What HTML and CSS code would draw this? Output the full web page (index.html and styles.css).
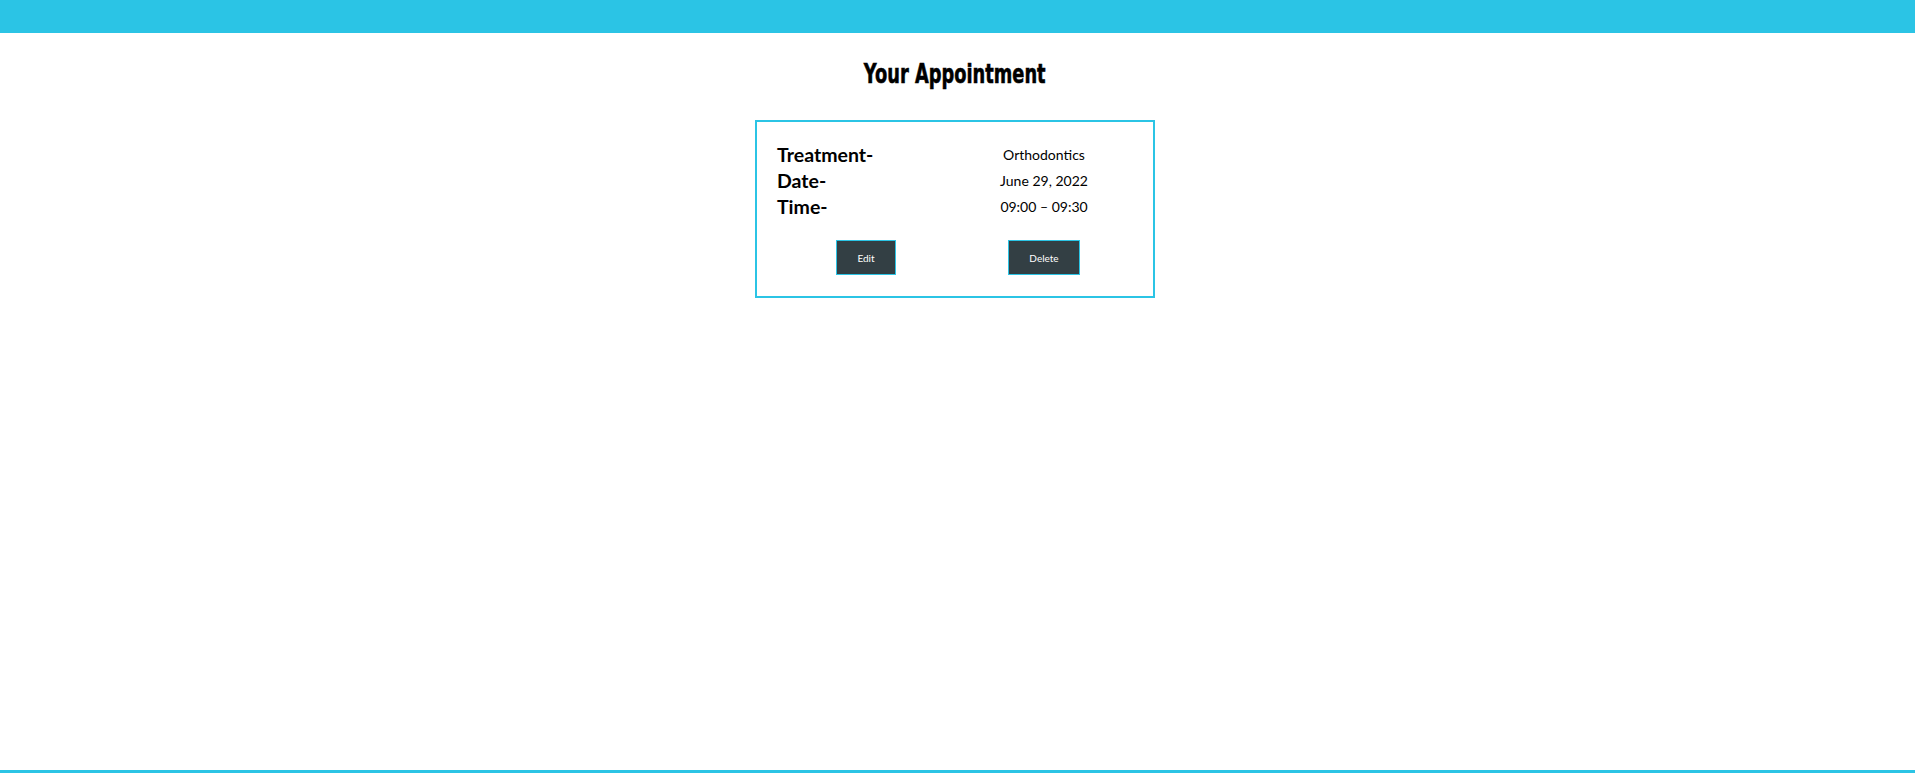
FILE: index.html
```html
<!DOCTYPE html>
<html lang="en">
<head>
<meta charset="utf-8">
<title>Your Appointment</title>
<link rel="stylesheet" href="styles.css">
</head>
<body>
<header class="topbar"></header>
<main class="content">
  <h1 class="title"><span class="title-text">Your Appointment</span></h1>
  <section class="card">
    <div class="details">
      <div class="label">Treatment-</div>
      <div class="value">Orthodontics</div>
      <div class="label">Date-</div>
      <div class="value">June 29, 2022</div>
      <div class="label">Time-</div>
      <div class="value">09:00 – 09:30</div>
    </div>
    <div class="actions">
      <div class="action-cell"><button class="btn">Edit</button></div>
      <div class="action-cell"><button class="btn">Delete</button></div>
    </div>
  </section>
</main>
<footer class="footer"></footer>
</body>
</html>
```

FILE: styles.css
```css
* { box-sizing: border-box; }
html, body { margin: 0; padding: 0; }
body {
  min-height: 100vh;
  display: flex;
  flex-direction: column;
  background: #ffffff;
  color: #000000;
  font-family: Lato, "Open Sans", "Liberation Sans", sans-serif;
}
.topbar {
  height: 33px;
  background: #2bc4e5;
  flex: none;
}
.content {
  flex: 1;
  display: flex;
  flex-direction: column;
  align-items: center;
  padding-right: 5px;
}
.title {
  margin: 26px 0 0;
  font-family: "DejaVu Sans", sans-serif;
  font-weight: 700;
  font-size: 26px;
  line-height: 30px;
  text-align: center;
}
.title-text {
  display: inline-block;
  transform: scaleX(0.685);
  -webkit-text-stroke: 0.6px #000;
}
.card {
  margin-top: 31px;
  width: 400px;
  border: 2px solid #2bc4e5;
  padding: 20px 20px 21px;
}
.details {
  display: grid;
  grid-template-columns: 1fr 1fr;
  align-items: start;
}
.label {
  font-weight: 700;
  font-size: 19.5px;
  line-height: 26px;
}
.value {
  text-align: center;
  font-size: 14px;
  line-height: 26px;
}
.actions {
  display: grid;
  grid-template-columns: 1fr 1fr;
  margin-top: 20px;
}
.action-cell {
  display: flex;
  justify-content: center;
}
.btn {
  height: 35px;
  padding: 0 20px;
  background: #333f44;
  color: #ffffff;
  border: 1px solid #2bc4e5;
  font-family: Lato, "Open Sans", sans-serif;
  font-size: 10px;
  cursor: pointer;
}
.footer {
  flex: none;
  height: 3px;
  background: #2bc4e5;
}
```
